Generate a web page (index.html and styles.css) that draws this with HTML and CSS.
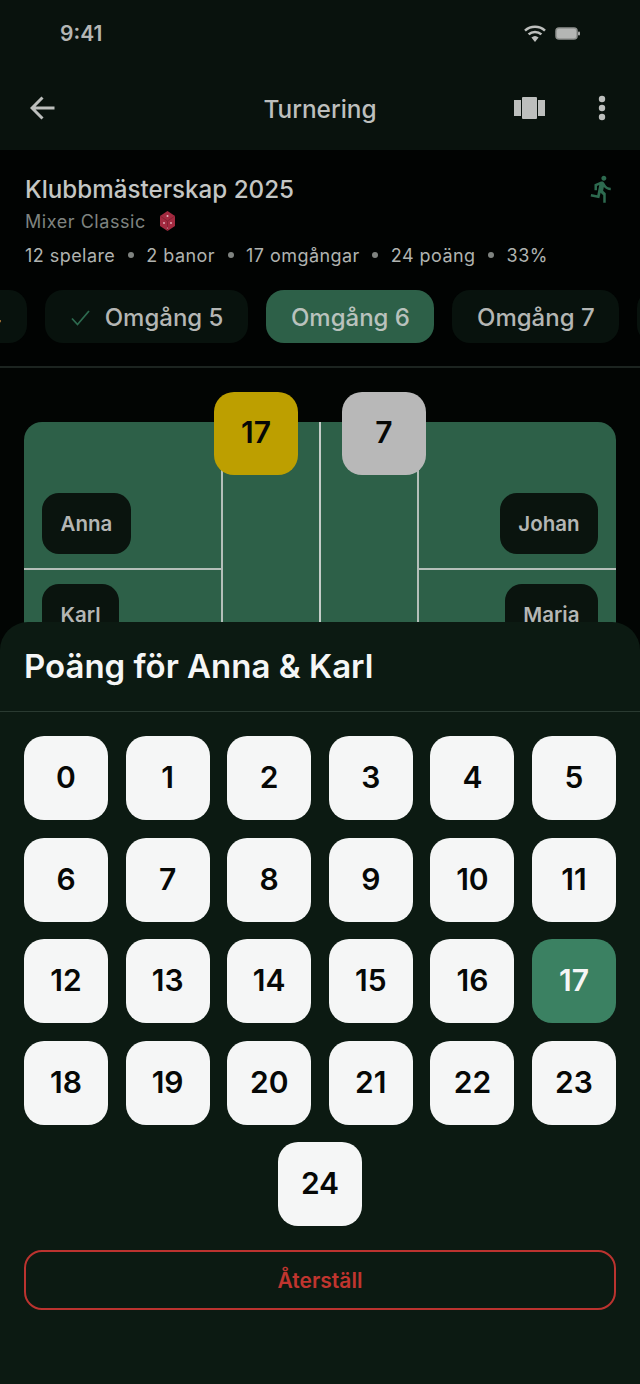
FILE: index.html
```html
<!DOCTYPE html>
<html lang="sv">
<head>
    <meta charset="UTF-8">
    <meta name="viewport" content="width=device-width, initial-scale=1.0">
    <title>Turnering</title>
    <link rel="stylesheet" href="styles.css">
</head>
<body>
    <div class="screen">
        <div class="statusbar">
            <span class="time">9:41</span>
            <div class="status-icons">
                <svg width="24" height="17" viewBox="0 0 24 17"><path d="M12 17l-3.6-4.4a5.6 5.6 0 0 1 7.2 0z" fill="#bdbfbd"/><path d="M5.6 9.4a9.6 9.6 0 0 1 12.8 0M2 5.6a15 15 0 0 1 20 0" fill="none" stroke="#bdbfbd" stroke-width="2.6"/></svg>
                <svg width="25" height="13" viewBox="0 0 25 13"><rect x="1" y="1" width="21" height="11" rx="3" fill="#b4b6b4" stroke="#8e918e" stroke-width="1.5"/><rect x="23" y="4.5" width="2" height="4" rx="1" fill="#a8aaa8"/></svg>
            </div>
        </div>

        <header class="appbar">
            <svg class="back" width="25" height="24" viewBox="0 0 25 24"><path d="M24.5 12H2M12.5 1.5L2 12l10.5 10.5" fill="none" stroke="#bdbfbd" stroke-width="3"/></svg>
            <h1>Turnering</h1>
            <svg class="carousel" width="31" height="22" viewBox="0 0 31 22"><rect y="3" width="7" height="16" fill="#bdbfbd"/><rect x="8" width="15" height="22" rx="1" fill="#bdbfbd"/><rect x="24" y="3" width="7" height="16" fill="#bdbfbd"/></svg>
            <svg class="more" width="8" height="26" viewBox="0 0 8 26"><circle cx="4" cy="4" r="3.2" fill="#bdbfbd"/><circle cx="4" cy="13" r="3.2" fill="#bdbfbd"/><circle cx="4" cy="22" r="3.2" fill="#bdbfbd"/></svg>
        </header>

        <section class="info">
            <div class="title-row">
                <h2>Klubbmästerskap 2025</h2>
                <svg width="30" height="30" viewBox="0 0 24 24"><path d="M13.49 5.48c1.1 0 2-.9 2-2s-.9-2-2-2-2 .9-2 2 .9 2 2 2zm-3.6 13.9l1-4.4 2.1 2v6h2v-7.5l-2.1-2 .6-3c1.3 1.5 3.3 2.5 5.5 2.5v-2c-1.9 0-3.5-1-4.3-2.4l-1-1.6c-.4-.6-1-1-1.7-1-.3 0-.5.1-.8.1l-5.2 2.2v4.7h2v-3.4l1.8-.7-1.6 8.1-4.9-1-.4 2 7 1.4z" fill="#2d6a4f"/></svg>
            </div>
            <div class="mode">
                <span>Mixer Classic</span>
                <svg width="15" height="20" viewBox="0 0 15 20"><path d="M7.5 0L15 5v10l-7.5 5L0 15V5z" fill="#a32a40"/><path d="M0 5l7.5 5 7.5-5M7.5 10v10" fill="none" stroke="#7d1f30" stroke-width=".8"/><circle cx="7.5" cy="5" r="1" fill="#e8b8c0"/><circle cx="4" cy="12" r=".9" fill="#e8b8c0"/><circle cx="11" cy="12" r=".9" fill="#e8b8c0"/><circle cx="7.5" cy="17" r=".6" fill="#e8b8c0"/></svg>
            </div>
            <div class="stats">
                <span>12 spelare</span><i></i>
                <span>2 banor</span><i></i>
                <span>17 omgångar</span><i></i>
                <span>24 poäng</span><i></i>
                <span>33%</span>
            </div>
            <div class="tabs">
                <div class="tab"><svg width="19" height="16" viewBox="0 0 19 16"><path d="M1 8.5l5.5 6L18 1" fill="none" stroke="#2d6a4f" stroke-width="1.8"/></svg>Omgång 4</div>
                <div class="tab"><svg width="19" height="16" viewBox="0 0 19 16"><path d="M1 8.5l5.5 6L18 1" fill="none" stroke="#2d6a4f" stroke-width="1.8"/></svg>Omgång 5</div>
                <div class="tab plain active">Omgång 6</div>
                <div class="tab plain">Omgång 7</div>
                <div class="tab plain next"></div>
            </div>
        </section>

        <main class="match">
            <div class="court">
                <div class="side">
                    <div class="half top"><div class="player">Anna</div></div>
                    <div class="half"><div class="player">Karl</div></div>
                </div>
                <div class="box"></div>
                <div class="box"></div>
                <div class="side right">
                    <div class="half top"><div class="player">Johan</div></div>
                    <div class="half"><div class="player">Maria</div></div>
                </div>
                <div class="score gold">17</div>
                <div class="score silver">7</div>
            </div>
        </main>

        <div class="sheet">
            <h3>Poäng för Anna &amp; Karl</h3>
            <div class="keys">
                <button class="key">0</button>
                <button class="key">1</button>
                <button class="key">2</button>
                <button class="key">3</button>
                <button class="key">4</button>
                <button class="key">5</button>
                <button class="key">6</button>
                <button class="key">7</button>
                <button class="key">8</button>
                <button class="key">9</button>
                <button class="key">10</button>
                <button class="key">11</button>
                <button class="key">12</button>
                <button class="key">13</button>
                <button class="key">14</button>
                <button class="key">15</button>
                <button class="key">16</button>
                <button class="key selected">17</button>
                <button class="key">18</button>
                <button class="key">19</button>
                <button class="key">20</button>
                <button class="key">21</button>
                <button class="key">22</button>
                <button class="key">23</button>
                <button class="key">24</button>
            </div>
            <button class="reset">Återställ</button>
        </div>
    </div>
</body>
</html>
```

FILE: styles.css
```css
* {
    box-sizing: border-box;
}
body {
    margin: 0;
    background-color: #010302;
    font-family: Inter, "Noto Sans", sans-serif;
}
h1, h2, h3 {
    margin: 0;
}
.screen {
    position: relative;
    width: 640px;
    height: 1384px;
    overflow: hidden;
    display: flex;
    flex-direction: column;
}
.statusbar {
    height: 66px;
    flex: none;
    background-color: #09120d;
    display: flex;
    justify-content: space-between;
    align-items: center;
    padding: 0 60px;
}
.time {
    font-size: 21px;
    font-weight: 600;
    color: #b4b6b4;
}
.status-icons {
    display: flex;
    align-items: center;
    gap: 8px;
}
.appbar {
    position: relative;
    height: 84px;
    flex: none;
    background-color: #09120d;
    display: flex;
    align-items: center;
    padding: 0 34px 0 30px;
}
.appbar h1 {
    position: absolute;
    left: 0;
    right: 0;
    top: 28px;
    text-align: center;
    font-size: 24.4px;
    line-height: 30px;
    font-weight: 500;
    color: #bdbfbd;
}
.carousel {
    margin-left: auto;
    margin-right: 53px;
}
.info {
    flex: none;
    height: 218px;
    background-color: #010302;
    border-bottom: 2px solid #1c2420;
    padding: 24px 0 0 25px;
}
.title-row {
    display: flex;
    justify-content: space-between;
    align-items: center;
    padding-right: 23px;
    height: 30px;
}
.title-row h2 {
    font-size: 24.2px;
    font-weight: 500;
    color: #c4c6c4;
}
.mode {
    display: flex;
    align-items: center;
    gap: 14px;
    margin-top: 6px;
    height: 22px;
    font-size: 18px;
    letter-spacing: 0.55px;
    color: #7f8380;
}
.stats {
    display: flex;
    align-items: center;
    margin-top: 11px;
    height: 24px;
    font-size: 18px;
    letter-spacing: 0.45px;
    color: #b0b3b0;
}
.stats i {
    width: 6px;
    height: 6px;
    margin: 0 12.5px;
    border-radius: 50%;
    background-color: #7f8380;
}
.tabs {
    display: flex;
    gap: 18px;
    margin: 23px 0 0 -203px;
    width: 1000px;
}
.tab {
    height: 53px;
    flex: none;
    display: flex;
    align-items: center;
    gap: 15px;
    padding: 2px 25px 0 26px;
    border-radius: 18px;
    background-color: #08120d;
    font-size: 24px;
    font-weight: 500;
    color: #b4b6b4;
}
.tab.plain {
    padding: 2px 24.5px 0;
}
.tab.next {
    width: 168px;
}
.tab.active {
    background-color: #2d6048;
    color: #b9c2bd;
}
.match {
    flex: 1;
    padding: 54px 24px 0;
    background-color: #020503;
}
.court {
    position: relative;
    display: grid;
    grid-template-columns: 199px 97px 97px 199px;
    height: 500px;
    border-radius: 18px;
    background-color: #2d6048;
}
.side {
    border-right: 2px solid #b4bfb9;
}
.side.right {
    border-right: none;
    border-left: 2px solid #b4bfb9;
}
.box:nth-child(2) {
    border-right: 2px solid #c4cdc8;
    margin-right: -1px;
}
.half {
    padding: 14px 0 0 18px;
}
.half.top {
    height: 148px;
    padding-top: 71px;
    border-bottom: 2px solid #b4bfb9;
}
.right .half {
    display: flex;
    justify-content: flex-end;
    padding-left: 0;
    padding-right: 18px;
}
.player {
    display: inline-flex;
    align-items: center;
    height: 61px;
    padding: 0 18.5px;
    border-radius: 17px;
    background-color: #0a140e;
    font-size: 20.5px;
    font-weight: 600;
    color: #b4b6b4;
}
.score {
    position: absolute;
    top: -30px;
    width: 84px;
    height: 83px;
    padding-bottom: 3px;
    border-radius: 20px;
    display: flex;
    align-items: center;
    justify-content: center;
    font-size: 30px;
    font-weight: 600;
    color: #060806;
}
.score.gold {
    left: 190px;
    background-color: #bd9f00;
}
.score.silver {
    left: 318px;
    background-color: #b8b8b8;
}
.sheet {
    position: absolute;
    left: 0;
    right: 0;
    top: 622px;
    bottom: 0;
    border-radius: 28px 28px 0 0;
    background-color: #0c1a12;
}
.sheet h3 {
    height: 90px;
    padding: 24px 24px 0;
    border-bottom: 1px solid #2a3a31;
    font-size: 33px;
    line-height: 40px;
    font-weight: 600;
    color: #f5f6f6;
}
.keys {
    display: flex;
    flex-wrap: wrap;
    justify-content: center;
    gap: 17.6px;
    padding: 24px 24px 0;
}
.key {
    width: 84px;
    height: 84px;
    padding: 0 0 2px;
    border: none;
    border-radius: 20px;
    background-color: #f5f6f6;
    font-family: inherit;
    font-size: 30px;
    font-weight: 600;
    color: #060806;
}
.key.selected {
    background-color: #3b8162;
    color: #f5f6f6;
}
.reset {
    display: block;
    width: 592px;
    height: 60px;
    margin: 24px 24px 0;
    padding-top: 2px;
    border: 2.5px solid #bb332f;
    border-radius: 18px;
    background: none;
    font-family: inherit;
    font-size: 21px;
    font-weight: 600;
    color: #c0352f;
}
```
